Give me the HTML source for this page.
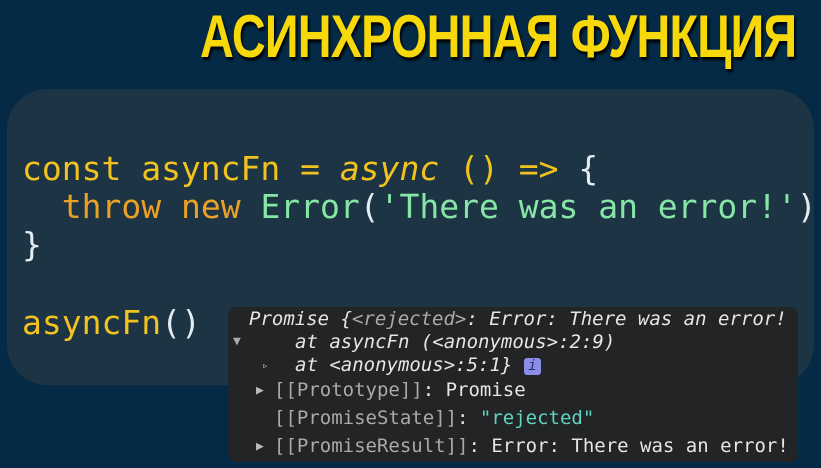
<!DOCTYPE html>
<html><head><meta charset="utf-8"><style>
body{margin:0;width:821px;height:468px;background:#042a45;overflow:hidden;position:relative;font-family:"DejaVu Sans Mono","Liberation Mono",monospace}
.title{position:absolute;left:200px;top:2px;width:800px;font-family:"Liberation Sans",sans-serif;font-weight:bold;font-size:60px;color:#f7d80a;white-space:nowrap;transform:scaleX(0.78);transform-origin:left top;text-shadow:2px 3px 3px #000;letter-spacing:-1px}
.panel{position:absolute;left:7px;top:89px;width:807px;height:296px;background:#1c3443;border-radius:40px}
.code{position:absolute;left:22px;font-size:33px;white-space:pre;color:#f2c21f;line-height:38px}
.y{color:#f2c21f}.o{color:#eba126}.g{color:#85e6a5}.w{color:#e3ecf2}
.con{position:absolute;left:228px;top:307px;width:570px;height:155px;background:#232425;border-radius:8px;font-size:19px;color:#e6e6e6}
.con div{position:absolute;white-space:pre;line-height:22px}
.i{font-style:italic}.gr{color:#aaa}.t{color:#5fd6c0}
.info{display:inline-block;width:17px;height:17px;background:#8a8ee8;color:#2a2a6a;border-radius:3px;font-size:14px;text-align:center;line-height:17px;vertical-align:1px}
</style></head><body>
<div class="title">АСИНХРОННАЯ ФУНКЦИЯ</div>
<div class="panel"></div>
<div class="code" style="top:150px"><span class="y">const asyncFn = </span><span class="y" style="font-style:italic">async</span><span class="y"> () =&gt; </span><span class="w">{</span></div>
<div class="code" style="top:188px">  <span class="o">throw new </span><span class="g">Error</span><span class="w">(</span><span class="g">'There was an error!'</span><span class="w">)</span></div>
<div class="code w" style="top:226px;color:#e3ecf2">}</div>
<div class="code" style="top:304px"><span class="y">asyncFn</span><span class="w">()</span></div>
<div class="con">
<div class="i" style="left:21px;top:1px">Promise {<span class="gr">&lt;rejected&gt;</span>: Error: There was an error!</div>
<div style="left:5px;top:24px;font-size:13px;color:#aaa">▼</div>
<div class="i" style="left:67px;top:24px">at asyncFn (&lt;anonymous&gt;:2:9)</div>
<div style="left:34px;top:48px;font-size:11px;color:#aaa">▹</div>
<div class="i" style="left:67px;top:47px">at &lt;anonymous&gt;:5:1} <span class="info">i</span></div>
<div style="left:28px;top:73px;font-size:13px;color:#bbb">▶</div>
<div style="left:46px;top:72px"><span class="gr">[[Prototype]]</span>: Promise</div>
<div style="left:46px;top:100px"><span class="gr">[[PromiseState]]</span>: <span class="t">"rejected"</span></div>
<div style="left:28px;top:129px;font-size:13px;color:#bbb">▶</div>
<div style="left:46px;top:128px"><span class="gr">[[PromiseResult]]</span>: Error: There was an error!</div>
</div>
</body></html>
